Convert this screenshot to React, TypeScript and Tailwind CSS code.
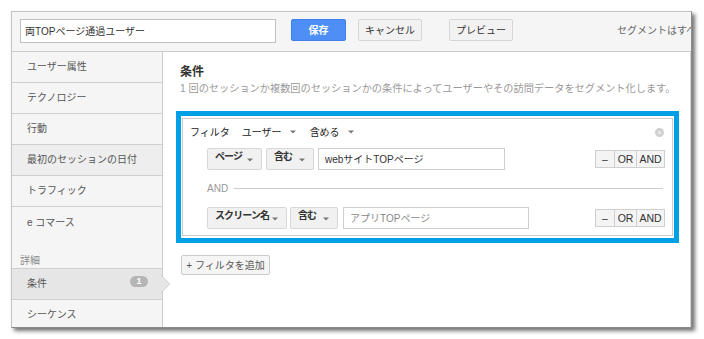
import React from "react";

function Caret({ className = "" }: { className?: string }) {
  return (
    <svg width="6" height="4" viewBox="0 0 6 4" className={`shrink-0 ${className}`}>
      <path d="M0 0.5 L6 0.5 L3 3.5 Z" fill="#777" />
    </svg>
  );
}

function SideRow({
  label,
  bg = "bg-[#f5f5f5]",
  border = true,
  children,
}: {
  label: string;
  bg?: string;
  border?: boolean;
  children?: React.ReactNode;
}) {
  return (
    <div
      className={`relative flex h-[31px] items-center pl-[15px] pr-[15px] text-[10px] text-[#555] ${bg} ${
        border ? "border-b border-[#cfcfcf]" : ""
      }`}
    >
      <span className="whitespace-nowrap leading-[12px]">{label}</span>
      {children}
    </div>
  );
}

function DropBtn({ label, w }: { label: string; w: string }) {
  return (
    <div
      className={`flex h-[22px] shrink-0 ${w} items-center justify-between rounded-[2px] border border-[#d8d8d8] bg-[#f1f1f1] pl-[7px] pr-[8px]`}
    >
      <span className="-mt-[4px] whitespace-nowrap text-[10px] font-bold leading-[12px] tracking-[-0.9px] text-[#333]">
        {label}
      </span>
      <Caret className="mt-[2px]" />
    </div>
  );
}

function Seg() {
  return (
    <div className="flex h-[18px] shrink-0 border border-[#cfcfcf] bg-[#f4f4f4] text-[10.5px] leading-[12px] text-[#333]">
      <div className="flex w-[19px] items-center justify-center border-r border-[#cfcfcf]">–</div>
      <div className="flex w-[22px] items-center justify-center border-r border-[#cfcfcf]">OR</div>
      <div className="flex w-[27px] items-center justify-center">AND</div>
    </div>
  );
}

export default function App() {
  return (
    <div className="h-[339px] w-[704px] overflow-hidden bg-white pl-[11px] pt-[11px] font-['Liberation_Sans','Noto_Sans_CJK_JP',sans-serif]">
      <div className="flex h-[317px] w-[681px] flex-col overflow-hidden border border-[#c4c4c4] border-r-[#8a8a8a] border-b-[#8a8a8a] bg-white shadow-[3px_3px_4px_rgba(0,0,0,0.55)]">
        {/* header */}
        <div className="flex h-[40px] shrink-0 items-start overflow-hidden border-b border-[#cccccc] bg-[#f5f5f5] pl-[8px] pt-[7px]">
          <div className="flex h-[24px] w-[256px] shrink-0 items-center border border-[#c0c0c0] bg-white pl-[4px] text-[10px] text-[#333]">
            両TOPページ通過ユーザー
          </div>
          <div className="ml-[15px] flex h-[22px] w-[55px] shrink-0 items-center justify-center rounded-[2px] border border-[#3f7fe8] bg-[#4d8ff5] text-[10px] font-bold text-white">
            保存
          </div>
          <div className="ml-[12px] flex h-[22px] w-[64px] shrink-0 items-center justify-center whitespace-nowrap rounded-[2px] border border-[#d6d6d6] bg-[#f2f2f2] text-[10px] text-[#333]">
            キャンセル
          </div>
          <div className="ml-[27px] flex h-[22px] w-[64px] shrink-0 items-center justify-center whitespace-nowrap rounded-[2px] border border-[#d6d6d6] bg-[#f2f2f2] text-[10px] text-[#333]">
            プレビュー
          </div>
          <div className="ml-[104px] flex h-[22px] shrink-0 items-center whitespace-nowrap text-[10px] text-[#666]">
            セグメントはすべてのユーザーに適用されます
          </div>
        </div>

        <div className="flex min-h-0 flex-1">
          {/* sidebar */}
          <div className="relative w-[151px] shrink-0 border-r border-[#cccccc] bg-[#f5f5f5]">
            <SideRow label="ユーザー属性" />
            <SideRow label="テクノロジー" />
            <SideRow label="行動" />
            <SideRow label="最初のセッションの日付" bg="bg-[#eeeeee]" />
            <SideRow label="トラフィック" />
            <SideRow label="e コマース" border={false} />
            <div className="h-[31px] border-b border-[#cfcfcf] pl-[8px] pt-[17px] text-[10px] leading-[12px] text-[#888]">
              詳細
            </div>
            <SideRow label="条件" bg="bg-[#e6e6e6]">
              <div className="absolute right-[14px] top-[7px] flex h-[11px] w-[18px] items-center justify-center rounded-full bg-[#b5b5b5] text-[9px] font-bold leading-[9px] text-white">
                1
              </div>
            </SideRow>
            <SideRow label="シーケンス" />
            <svg
              width="10"
              height="18"
              viewBox="0 0 10 18"
              className="absolute right-[-9px] top-[223px]"
            >
              <path d="M0 0 L8.5 9 L0 18 Z" fill="#e6e6e6" />
              <path d="M0 0 L8.5 9 L0 18" fill="none" stroke="#cccccc" strokeWidth="1" />
            </svg>
          </div>

          {/* main */}
          <div className="flex min-w-0 flex-1 flex-col border-r border-[#d4d4d4] bg-white">
            <div className="pl-[17px] pt-[12px] text-[12px] font-bold leading-[16px] text-[#333]">条件</div>
            <div className="mt-[2px] whitespace-nowrap pl-[17px] text-[10.2px] leading-[14px] text-[#999]">
              1 回のセッションか複数回のセッションかの条件によってユーザーやその訪問データをセグメント化します。
            </div>

            <div className="ml-[13px] mt-[15px] w-[503px] border-[5px] border-[#00a0e6] bg-white p-[1px] pt-[2px] pb-[2px]">
              <div className="border border-[#cccccc] pb-[6px] pl-[7px] pr-[7px] pt-[3px]">
                {/* filter row */}
                <div className="flex h-[20px] items-center text-[10px] text-[#222]">
                  <span>フィルタ</span>
                  <span className="ml-[12px]">ユーザー</span>
                  <Caret className="ml-[8px]" />
                  <span className="ml-[14px]">含める</span>
                  <Caret className="ml-[8px]" />
                  <div className="ml-auto mr-[1px] flex h-[9px] w-[9px] items-center justify-center rounded-full bg-[#cfcfcf] text-[7px] leading-[7px] text-white">
                    ×
                  </div>
                </div>

                {/* row 1 */}
                <div className="mt-[6px] flex h-[22px] items-center pl-[17px]">
                  <DropBtn label="ページ" w="w-[55px]" />
                  <div className="ml-[4px] shrink-0">
                    <DropBtn label="含む" w="w-[48px]" />
                  </div>
                  <div className="ml-[4px] flex h-[22px] w-[187px] shrink-0 items-center whitespace-nowrap border border-[#cfcfcf] bg-white pl-[6px] text-[10px] text-[#333]">
                    webサイトTOPページ
                  </div>
                  <div className="ml-auto">
                    <Seg />
                  </div>
                </div>

                {/* AND */}
                <div className="mt-[11px] flex h-[14px] items-center pl-[17px] pr-[2px]">
                  <span className="text-[10px] text-[#999]">AND</span>
                  <div className="ml-[6px] h-px flex-1 bg-[#cccccc]" />
                </div>

                {/* row 2 */}
                <div className="mt-[12px] flex h-[22px] items-center pl-[17px]">
                  <DropBtn label="スクリーン名" w="w-[80px]" />
                  <div className="ml-[3px] shrink-0">
                    <DropBtn label="含む" w="w-[48px]" />
                  </div>
                  <div className="ml-[5px] flex h-[22px] w-[186px] shrink-0 items-center whitespace-nowrap border border-[#cfcfcf] bg-white pl-[6px] text-[10px] text-[#888]">
                    アプリTOPページ
                  </div>
                  <div className="ml-auto">
                    <Seg />
                  </div>
                </div>
              </div>
            </div>

            <div className="ml-[18px] mt-[12px] flex h-[20px] w-[89px] items-center justify-center whitespace-nowrap rounded-[2px] border border-[#cccccc] bg-[#f5f5f5] text-[10px] text-[#555]">
              + フィルタを追加
            </div>
          </div>
        </div>
      </div>
    </div>
  );
}
